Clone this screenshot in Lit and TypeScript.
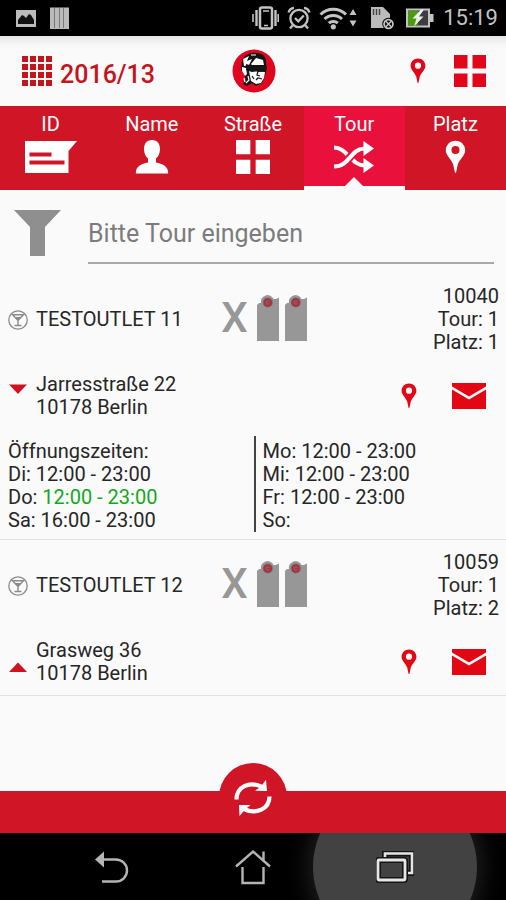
import { LitElement, html, css, svg, nothing } from "lit";
import { customElement, property, state } from "lit/decorators.js";
import { classMap } from "lit/directives/class-map.js";

interface Hours {
  day: string;
  time: string;
  today?: boolean;
}

interface Outlet {
  id: string;
  name: string;
  tour: number;
  place: number;
  street: string;
  city: string;
  open: boolean;
  left: Hours[];
  right: Hours[];
}

const OUTLETS: Outlet[] = [
  {
    id: "10040",
    name: "TESTOUTLET 11",
    tour: 1,
    place: 1,
    street: "Jarresstraße 22",
    city: "10178 Berlin",
    open: true,
    left: [
      { day: "Di", time: "12:00 - 23:00" },
      { day: "Do", time: "12:00 - 23:00", today: true },
      { day: "Sa", time: "16:00 - 23:00" },
    ],
    right: [
      { day: "Mo", time: "12:00 - 23:00" },
      { day: "Mi", time: "12:00 - 23:00" },
      { day: "Fr", time: "12:00 - 23:00" },
      { day: "So", time: "" },
    ],
  },
  {
    id: "10059",
    name: "TESTOUTLET 12",
    tour: 1,
    place: 2,
    street: "Grasweg 36",
    city: "10178 Berlin",
    open: false,
    left: [],
    right: [],
  },
];

const reset = css`
  *,
  *::before,
  *::after {
    box-sizing: border-box;
  }
  svg {
    display: block;
    flex: none;
  }
  button {
    margin: 0;
    padding: 0;
    border: 0;
    background: none;
    color: inherit;
    font: inherit;
    cursor: pointer;
  }
`;

/* Map pin on a 16 x 26 grid */
const pinShape = svg`<path fill-rule="evenodd" d="M8 0.5C3.8 0.5 0.6 3.7 0.6 7.8C0.6 11.8 4.4 14 6.2 18.6L7.6 25h0.8L9.8 18.6C11.6 14 15.4 11.8 15.4 7.8C15.4 3.7 12.2 0.5 8 0.5ZM8 4.6a3.1 3.1 0 1 1 0 6.2a3.1 3.1 0 1 1 0-6.2Z"/>`;

const pin = (w: number, h: number) =>
  html`<svg width=${w} height=${h} viewBox="0 0 16 26" fill="currentColor" aria-hidden="true">${pinShape}</svg>`;

const tiles = (size: number) =>
  html`<svg width=${size} height=${size} viewBox="0 0 32 32" fill="currentColor" aria-hidden="true">
    <path d="M0 0h13.5v13.5H0zM18.5 0H32v13.5H18.5zM0 18.5h13.5V32H0zM18.5 18.5H32V32H18.5z" />
  </svg>`;

@customElement("status-bar")
class StatusBar extends LitElement {
  static styles = [
    reset,
    css`
      :host {
        display: flex;
        align-items: center;
        height: 36px;
        padding: 0 8px 0 16px;
        background: #000;
        color: #c3c3c3;
      }
      .group {
        display: flex;
        align-items: center;
        gap: 8px;
      }
      .notices {
        flex: 1;
        gap: 14px;
      }
      .time {
        font-size: 22px;
        line-height: 36px;
      }
    `,
  ];

  render() {
    return html`
      <div class="group notices">
        <svg width="20" height="24" viewBox="0 0 20 24">
          <path fill="#bbb" d="M0 4h20v17H0z" />
          <path d="M2 18v-4l4-5 2 1 2 2 3-4 2 1 3 5v4z" fill="#111" />
        </svg>
        <svg width="19" height="24" viewBox="0 0 19 24">
          <path fill="#bbb" d="M0 1.500h19v21.500H0z" />
          <path d="M4.500 2v20M9.500 2v20M13.500 2v20" stroke="#777" stroke-width="1" />
        </svg>
      </div>
      <div class="group">
        <svg width="28" height="24" viewBox="0 0 28 24" fill="none" stroke="currentColor">
          <rect x="9" y="1.500" width="12" height="21" rx="2" stroke-width="2.500" />
          <path d="M12 5h6M13 19.500h4" stroke-width="1.600" />
          <path d="M5.500 4v16M24.500 4v16" stroke-width="2.400" />
          <path d="M2 8v8M27.200 8v8" stroke-width="1.600" />
        </svg>
        <svg width="24" height="24" viewBox="0 0 24 24" fill="none" stroke="currentColor" stroke-width="2.300">
          <circle cx="12" cy="12.500" r="8.600" />
          <path d="M8 12l3.300 3.300L16.800 9.500M1.500 6.500a6.500 6.500 0 0 1 5.500-4.500M22.500 6.500a6.500 6.500 0 0 0-5.500-4.500M5.500 19.500L3 22.500M18.500 19.500L21 22.500" />
        </svg>
        <svg width="40" height="24" viewBox="0 0 40 24">
          <g fill="none" stroke="currentColor" stroke-width="3">
            <path d="M1.500 8.500a18 18 0 0 1 25.500 0" />
            <path d="M5.500 13a12.500 12.500 0 0 1 17.500 0" />
            <path d="M9.800 17.200a6.500 6.500 0 0 1 9 0" />
          </g>
          <circle cx="14.300" cy="20.800" r="2.600" fill="currentColor" />
          <path fill="currentColor" d="M30.500 9l3.500-6 3.500 6zM30.500 14.500l3.500 6 3.500-6z" />
        </svg>
        <svg width="30" height="24" viewBox="0 0 30 24">
          <path d="M4 1h12l7 7v14H4z" fill="#bbb" />
          <path d="M6.500 3v6M9.500 3v6M12.500 3v6" stroke="#444" stroke-width="1.400" />
          <circle cx="21.500" cy="18" r="6.200" fill="#000" />
          <circle cx="21.500" cy="18" r="4.400" fill="none" stroke="#c3c3c3" stroke-width="1.800" />
          <path d="M18.800 15.300l5.400 5.400M24.200 15.300l-5.400 5.400" stroke="#c3c3c3" stroke-width="1.600" />
        </svg>
        <svg width="30" height="24" viewBox="0 0 30 24">
          <path fill="#c3c3c3" d="M1 2.500h24v5.500h3.500v8H25v5.500H1z" />
          <path fill="#3b3d40" d="M3 4.500h20v15H3z" />
          <path fill="#4c9a10" d="M3 4.500h10v15H3z" />
          <path fill="#eee" d="M16 3.500L7.500 12.500h4L9 20.500l9.500-10h-4.500l5-7z" />
        </svg>
        <span class="time">15:19</span>
      </div>
    `;
  }
}

@customElement("app-header")
class AppHeader extends LitElement {
  static styles = [
    reset,
    css`
      :host {
        display: grid;
        grid-template-columns: 1fr 44px 1fr;
        align-items: center;
        height: 70px;
        padding: 0 20px 0 22px;
        background: linear-gradient(#e4e4e4, #f6f6f6 8px, #fafafa 14px);
        color: #e2061a;
      }
      .week {
        display: flex;
        align-items: center;
        gap: 8px;
        color: #c4141c;
        font-size: 25px;
        font-weight: 500;
        line-height: 30px;
      }
      .date {
        padding-top: 8px;
      }
      .actions {
        display: flex;
        align-items: center;
        justify-content: flex-end;
        gap: 28px;
      }
    `,
  ];

  render() {
    const cells = [0, 8, 16, 24];
    return html`
      <button class="week">
        <svg width="30" height="30" viewBox="0 0 30 30" fill="currentColor" aria-hidden="true">
          ${cells.map((y) => cells.map((x) => svg`<rect x=${x} y=${y} width="6" height="6" />`))}
        </svg>
        <span class="date">2016/13</span>
      </button>
      <svg width="44" height="44" viewBox="0 0 44 44" role="img" aria-label="Logo">
        <circle cx="22" cy="22" r="21.500" fill="#e0061f" />
        <path fill="#151515" d="M10 12C12 6 18 3 25 4C31 4 35 9 34 14L35 19L33 27L30 34L24 37L20 34L15 37L11 35L14 31L12 25L9 21Z" />
        <path fill="#fff" d="M11 10L17 7L15 12L20 10L17 16L12 17ZM19 15L24 9L31 11L32 16L20 16ZM10 18L14 19L15 25L13 27L10 22ZM17 22L33 23L32 29L29 34L24 35L19 32Z" />
        <path fill="#151515" d="M14 15L21 17L34 16L34 22L27 23L25 22L20 23L14 21Z" />
        <path fill="none" stroke="#151515" stroke-width="1.200" d="M26 22L25 26L28 27M24 31L26 29L30 30M20 27L22 30M21 8L27 7" />
        <path fill="none" stroke="#fff" stroke-width="1.200" d="M16 27L17 31L14 34M19 6L24 6M12 29L13 33" />
      </svg>
      <div class="actions">
        <button aria-label="Karte">${pin(16, 26)}</button>
        <button aria-label="Menü">${tiles(32)}</button>
      </div>
    `;
  }
}

@customElement("filter-tabs")
class FilterTabs extends LitElement {
  @state() private active = "Tour";

  static styles = [
    reset,
    css`
      :host {
        display: flex;
        background: #d01527;
        color: #fff;
      }
      .tab {
        position: relative;
        display: flex;
        flex: 1;
        flex-direction: column;
        align-items: center;
        height: 84px;
        padding-top: 6px;
        font-size: 20px;
        line-height: 24px;
      }
      .active {
        background: #ea103c;
        border-bottom: 4px solid #fafafa;
      }
      .active::after {
        content: "";
        position: absolute;
        bottom: 0;
        left: 50%;
        border: 9px solid transparent;
        border-top-width: 0;
        border-bottom-color: #fafafa;
        transform: translateX(-50%);
      }
      .icon {
        display: flex;
        align-items: center;
        height: 42px;
      }
    `,
  ];

  private tabs = [
    {
      label: "ID",
      icon: html`<svg width="54" height="36" viewBox="0 0 54 36" aria-hidden="true">
        <path fill="#fff" d="M1 2h52l-8.500 10v22H1z" />
        <path fill="#d01527" d="M5.500 13.500h22v4h-22zM5.500 21.500h35v4h-35z" />
      </svg>`,
    },
    {
      label: "Name",
      icon: html`<svg width="34" height="36" viewBox="0 0 34 36" fill="#fff" aria-hidden="true">
        <path d="M17 1C11.500 1 8.800 5 9 10.500C9.200 14.500 10.500 17.500 13 19.500V23.500C7 25 0.800 26.500 0.800 34.500H33.200C33.200 26.500 27 25 21 23.500V19.500C23.500 17.500 24.800 14.500 25 10.500C25.200 5 22.500 1 17 1Z" />
      </svg>`,
    },
    { label: "Straße", icon: tiles(34) },
    {
      label: "Tour",
      icon: html`<svg width="40" height="32" viewBox="0 0 40 32" aria-hidden="true">
        <path fill="none" stroke="#fff" stroke-width="4" d="M0 6.500C13 6.500 17 24.500 31 24.500" />
        <path fill="none" stroke="#ea103c" stroke-width="8" d="M5 25.500C16 22.500 17 7.500 29 7.500" />
        <path fill="none" stroke="#fff" stroke-width="4.200" d="M0 25.500C16 25.500 16 7.500 31 7.500" />
        <path fill="#fff" d="M29.500 0L40 7.500L29.500 15ZM29.500 17L40 24.500L29.500 32Z" />
      </svg>`,
    },
    { label: "Platz", icon: pin(21, 34) },
  ];

  render() {
    return this.tabs.map(
      (t) => html`<button
        class=${classMap({ tab: true, active: t.label === this.active })}
        @click=${() => (this.active = t.label)}
      >
        <span>${t.label}</span>
        <span class="icon">${t.icon}</span>
      </button>`
    );
  }
}

@customElement("tour-search")
class TourSearch extends LitElement {
  static styles = [
    reset,
    css`
      :host {
        display: block;
      }
      .search {
        display: flex;
        align-items: flex-start;
        gap: 26px;
        padding: 20px 12px 10px 14px;
      }
      .field {
        flex: 1;
        min-width: 0;
        height: 54px;
        padding: 0 0 6px;
        border: 0;
        border-bottom: 2px solid #a9a9a9;
        border-radius: 0;
        outline: 0;
        background: none;
        color: #222;
        font-family: inherit;
        font-size: 25px;
      }
      .field::placeholder {
        color: #7c7c7c;
        opacity: 1;
      }
    `,
  ];

  render() {
    return html`<label class="search">
      <svg width="48" height="46" viewBox="0 0 48 46" role="img" aria-label="Tour filtern">
        <path fill="#8f8f8f" d="M0 0h47L31 17v29H16V17z" />
      </svg>
      <input class="field" type="text" placeholder="Bitte Tour eingeben" />
    </label>`;
  }
}

@customElement("outlet-item")
class OutletItem extends LitElement {
  @property({ attribute: false }) outlet!: Outlet;
  @state() private open = false;

  static styles = [
    reset,
    css`
      :host {
        display: block;
        padding: 11px 7px 0 8px;
        border-bottom: 1px solid #e2e2e2;
        font-size: 20px;
        line-height: 23px;
      }
      .head {
        display: grid;
        grid-template-columns: minmax(0, 10fr) auto minmax(0, 9fr);
        align-items: center;
      }
      .title,
      .address {
        display: flex;
        align-items: center;
        gap: 8px;
      }
      .stock {
        display: flex;
        align-items: center;
        gap: 6px;
        padding-bottom: 4px;
      }
      .cross {
        width: 30px;
        color: #979797;
        font-size: 42px;
        font-weight: 500;
        line-height: 46px;
      }
      .ids {
        text-align: right;
      }
      .address {
        margin-top: 19px;
        padding-bottom: 10px;
      }
      .lines {
        flex: 1;
      }
      .links {
        display: flex;
        align-items: center;
        gap: 35px;
        padding-right: 13px;
        color: #e30613;
      }
      .hours {
        display: grid;
        grid-template-columns: 1fr 1fr;
        padding: 7px 0;
      }
      .column {
        padding: 4px 0 0;
      }
      .column + .column {
        padding-left: 7px;
        border-left: 2px solid #444;
      }
      .today {
        color: #12a81c;
      }
    `,
  ];

  willUpdate(changed: Map<string, unknown>) {
    if (changed.has("outlet")) this.open = this.outlet.open;
  }

  private keg() {
    return html`<svg width="22" height="46" viewBox="0 0 22 46" aria-hidden="true">
      <path fill="#979797" d="M0 10l2-2h2a6.600 6.600 0 0 1 12.500-4h2.500l3-1.500v43.500H0z" />
      <circle cx="10.800" cy="7.500" r="5" fill="#7d6668" />
      <circle cx="10.800" cy="7.500" r="3.200" fill="none" stroke="#b52c3a" stroke-width="1.800" />
      <path d="M10 7.500h3" stroke="#b52c3a" stroke-width="1.500" />
    </svg>`;
  }

  private row(h: Hours) {
    return html`<div>${h.day}: <span class=${classMap({ today: !!h.today })}>${h.time}</span></div>`;
  }

  render() {
    const o = this.outlet;
    return html`
      <div class="head">
        <div class="title">
          <svg width="20" height="20" viewBox="0 0 20 20" fill="none" stroke="#8b8b8b" aria-hidden="true">
            <circle cx="10" cy="10" r="9.200" stroke-width="1.300" />
            <path d="M4.500 4.800h11L10 10.500zM10 10v5.200M6.500 15.500h7" stroke-width="1.400" />
            <path d="M6.500 7h7L10 10.500z" fill="#8b8b8b" stroke="none" />
          </svg>
          <span>${o.name}</span>
        </div>
        <div class="stock"><span class="cross">X</span>${this.keg()}${this.keg()}</div>
        <div class="ids">
          <div>${o.id}</div>
          <div>Tour: ${o.tour}</div>
          <div>Platz: ${o.place}</div>
        </div>
      </div>
      <div class="address">
        <button aria-label="Öffnungszeiten" aria-expanded=${this.open} @click=${() => (this.open = !this.open)}>
          <svg width="20" height="46" viewBox="0 0 20 46" fill="#d0111f" aria-hidden="true">
            <path d=${this.open ? "M1 11.500h18l-9 9.500z" : "M1 33h18l-9-9.500z"} />
          </svg>
        </button>
        <div class="lines">
          <div>${o.street}</div>
          <div>${o.city}</div>
        </div>
        <div class="links">
          <button aria-label="Auf Karte zeigen">${pin(16, 26)}</button>
          <button aria-label="Nachricht senden">
            <svg width="34" height="26" viewBox="0 0 34 26" aria-hidden="true">
              <path fill="currentColor" d="M0 0h34v3.600L17 13.400L0 3.600zM0 6.600L17 16.600L34 6.600V26H0z" />
            </svg>
          </button>
        </div>
      </div>
      ${this.open
        ? html`<div class="hours">
            <div class="column">
              <div>Öffnungszeiten:</div>
              ${o.left.map((h) => this.row(h))}
            </div>
            <div class="column">${o.right.map((h) => this.row(h))}</div>
          </div>`
        : nothing}
    `;
  }
}

@customElement("sync-bar")
class SyncBar extends LitElement {
  static styles = [
    reset,
    css`
      :host {
        position: relative;
        display: block;
        height: 42px;
        background: #d01527;
      }
      .sync {
        position: absolute;
        bottom: 0;
        left: 50%;
        display: flex;
        justify-content: center;
        width: 68px;
        height: 70px;
        padding-top: 16px;
        border-radius: 34px 34px 0 0;
        background: #d01527;
        transform: translateX(-50%);
      }
    `,
  ];

  render() {
    return html`<button class="sync" aria-label="Synchronisieren">
      <svg width="40" height="38" viewBox="0 0 40 38" aria-hidden="true">
        <g fill="none" stroke="#fff" stroke-width="4.200">
          <path d="M3.500 20.500C3.500 8 16 1.500 29 8" />
          <path d="M36.500 17.500C36.500 30 23 36 11 30" />
        </g>
        <path fill="#fff" d="M22 11.700L28 7.500L33 0.800L34 12ZM17.500 26L12 30.500L6.500 37L6 26Z" />
      </svg>
    </button>`;
  }
}

@customElement("system-nav")
class SystemNav extends LitElement {
  static styles = [
    reset,
    css`
      :host {
        display: flex;
        justify-content: center;
        height: 67px;
        overflow: hidden;
        background: #000;
      }
      .key {
        position: relative;
        display: flex;
        align-items: center;
        justify-content: center;
        width: 28%;
      }
      .pressed::before {
        content: "";
        position: absolute;
        top: 50%;
        left: 50%;
        width: 164px;
        height: 164px;
        border-radius: 50%;
        background: #424242;
        box-shadow: 0 0 24px 4px #222;
        transform: translate(-50%, -50%);
      }
      .glyph {
        position: relative;
      }
    `,
  ];

  render() {
    return html`
      <button class="key" aria-label="Zurück">
        <svg class="glyph" width="36" height="36" viewBox="0 0 36 36" aria-hidden="true">
          <path fill="none" stroke="#b4b4b4" stroke-width="2.400" d="M10 10.500h13a11 11 0 0 1 0 22H9" />
          <path fill="#b4b4b4" d="M2 10.500L11 2.500V18.500z" />
        </svg>
      </button>
      <button class="key" aria-label="Startseite">
        <svg class="glyph" width="36" height="36" viewBox="0 0 36 36" fill="none" stroke="#b4b4b4" stroke-width="2.400" aria-hidden="true">
          <path d="M1 17.500L18 2.500L35 17.500M7.500 18v16h21V18M28.500 12V2.500" />
        </svg>
      </button>
      <button class="key pressed" aria-label="Letzte Apps">
        <svg class="glyph" width="38" height="32" viewBox="0 0 38 32" fill="none" aria-hidden="true">
          <path d="M9 6V2.500h27V22h-5" stroke="#151515" stroke-width="6" />
          <path d="M9 7V2.500h27V22h-5" stroke="#e6e6e6" stroke-width="2.600" />
          <rect x="2" y="9" width="27" height="20" rx="1" stroke="#151515" stroke-width="6" fill="#424242" />
          <rect x="2" y="9" width="27" height="20" rx="1" stroke="#e6e6e6" stroke-width="2.800" />
        </svg>
      </button>
    `;
  }
}

@customElement("app-root")
class AppRoot extends LitElement {
  static styles = [
    reset,
    css`
      :host {
        display: flex;
        flex-direction: column;
        min-height: 100vh;
        background: #fafafa;
        color: #262626;
        font-family: Roboto, "Liberation Sans", sans-serif;
      }
      .list {
        flex: 1;
      }
    `,
  ];

  render() {
    return html`
      <status-bar></status-bar>
      <app-header></app-header>
      <filter-tabs></filter-tabs>
      <main class="list">
        <tour-search></tour-search>
        ${OUTLETS.map((o) => html`<outlet-item .outlet=${o}></outlet-item>`)}
      </main>
      <sync-bar></sync-bar>
      <system-nav></system-nav>
    `;
  }
}
